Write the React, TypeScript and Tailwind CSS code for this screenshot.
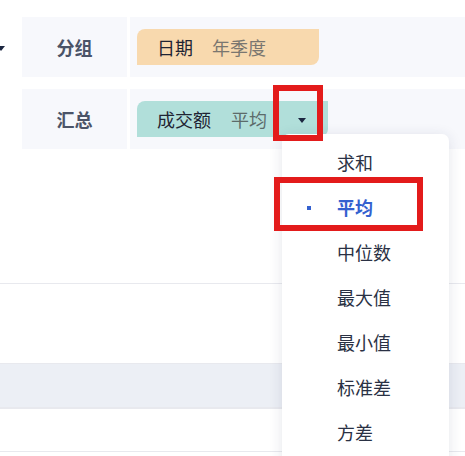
import { useState } from "react";

const options = ["求和", "平均", "中位数", "最大值", "最小值", "标准差", "方差"];

function Caret({ className = "" }: { className?: string }) {
  return (
    <span
      className={`inline-block w-0 h-0 border-l-[4px] border-r-[4px] border-t-[5px] border-l-transparent border-r-transparent border-t-[#1b2640] ${className}`}
    />
  );
}

export default function App() {
  const [selected, setSelected] = useState("平均");

  return (
    <div
      className="relative w-[465px] h-[456px] overflow-hidden bg-white text-[18px]"
      style={{ fontFamily: '"Noto Sans CJK SC", "Noto Sans", sans-serif' }}
    >
      {/* config rows */}
      <div className="pt-[17px] flex flex-col gap-[12px]">
        <div className="flex h-[60px]">
          <div className="w-[22px] flex items-center">
            <Caret className="-ml-[3px] mt-[2px]" />
          </div>
          <div className="w-[105px] bg-[#f7f8fc] flex items-center justify-center font-bold text-[#4b5468]">
            分组
          </div>
          <div className="ml-[3px] flex-1 bg-[#f7f8fc] flex items-center pl-[7px]">
            <div className="w-[182px] h-[36px] bg-[#f8d9ae] rounded-tl-[8px] rounded-br-[8px] flex items-center pl-[20px] gap-[19px]">
              <span className="text-[#1f2433]">日期</span>
              <span className="text-[#7a7670]">年季度</span>
            </div>
          </div>
        </div>

        <div className="flex h-[60px]">
          <div className="w-[22px]" />
          <div className="w-[105px] bg-[#f7f8fc] flex items-center justify-center font-bold text-[#4b5468]">
            汇总
          </div>
          <div className="ml-[3px] flex-1 bg-[#f7f8fc] flex items-center pl-[7px]">
            <div className="w-[191px] h-[36px] bg-[#b1dfda] rounded-tl-[8px] rounded-br-[8px] flex items-center pl-[20px]">
              <span className="text-[#1f2433]">成交额</span>
              <span className="ml-[20px] text-[#5c6b6a]">平均</span>
              <Caret className="ml-[31px] mt-[2px]" />
            </div>
          </div>
        </div>
      </div>

      {/* table behind */}
      <div className="mt-[134px] border-t border-[#e8e9ee] h-[80px]" />
      <div className="border-t border-[#e8e9ee] h-[44px] bg-[#eceff5]" />
      <div className="border-t-2 border-[#e8e9ee] h-[44px]" />
      <div className="border-t border-[#e8e9ee] h-[10px]" />

      {/* dropdown menu */}
      <div className="absolute left-[282px] top-[134px] w-[167px] h-[340px] bg-white rounded-t-[7px] shadow-[0_2px_14px_rgba(30,40,80,0.12)] pt-[6px]">
        {options.map((opt) => {
          const active = opt === selected;
          return (
            <div
              key={opt}
              onClick={() => setSelected(opt)}
              className="h-[45px] flex items-center cursor-pointer"
            >
              <span className="w-[55px] flex justify-center">
                {active && <span className="block w-[4px] h-[4px] bg-[#3461cf] ml-[-2px]" />}
              </span>
              <span className={active ? "font-bold text-[#3461cf]" : "text-[#2a3144]"}>{opt}</span>
            </div>
          );
        })}
      </div>

      {/* annotation boxes */}
      <div className="absolute left-[273px] top-[85px] w-[50px] h-[56px] border-[6px] border-[#e31b1b]" />
      <div className="absolute left-[274px] top-[177px] w-[149px] h-[54px] border-[6px] border-[#e31b1b]" />
    </div>
  );
}
